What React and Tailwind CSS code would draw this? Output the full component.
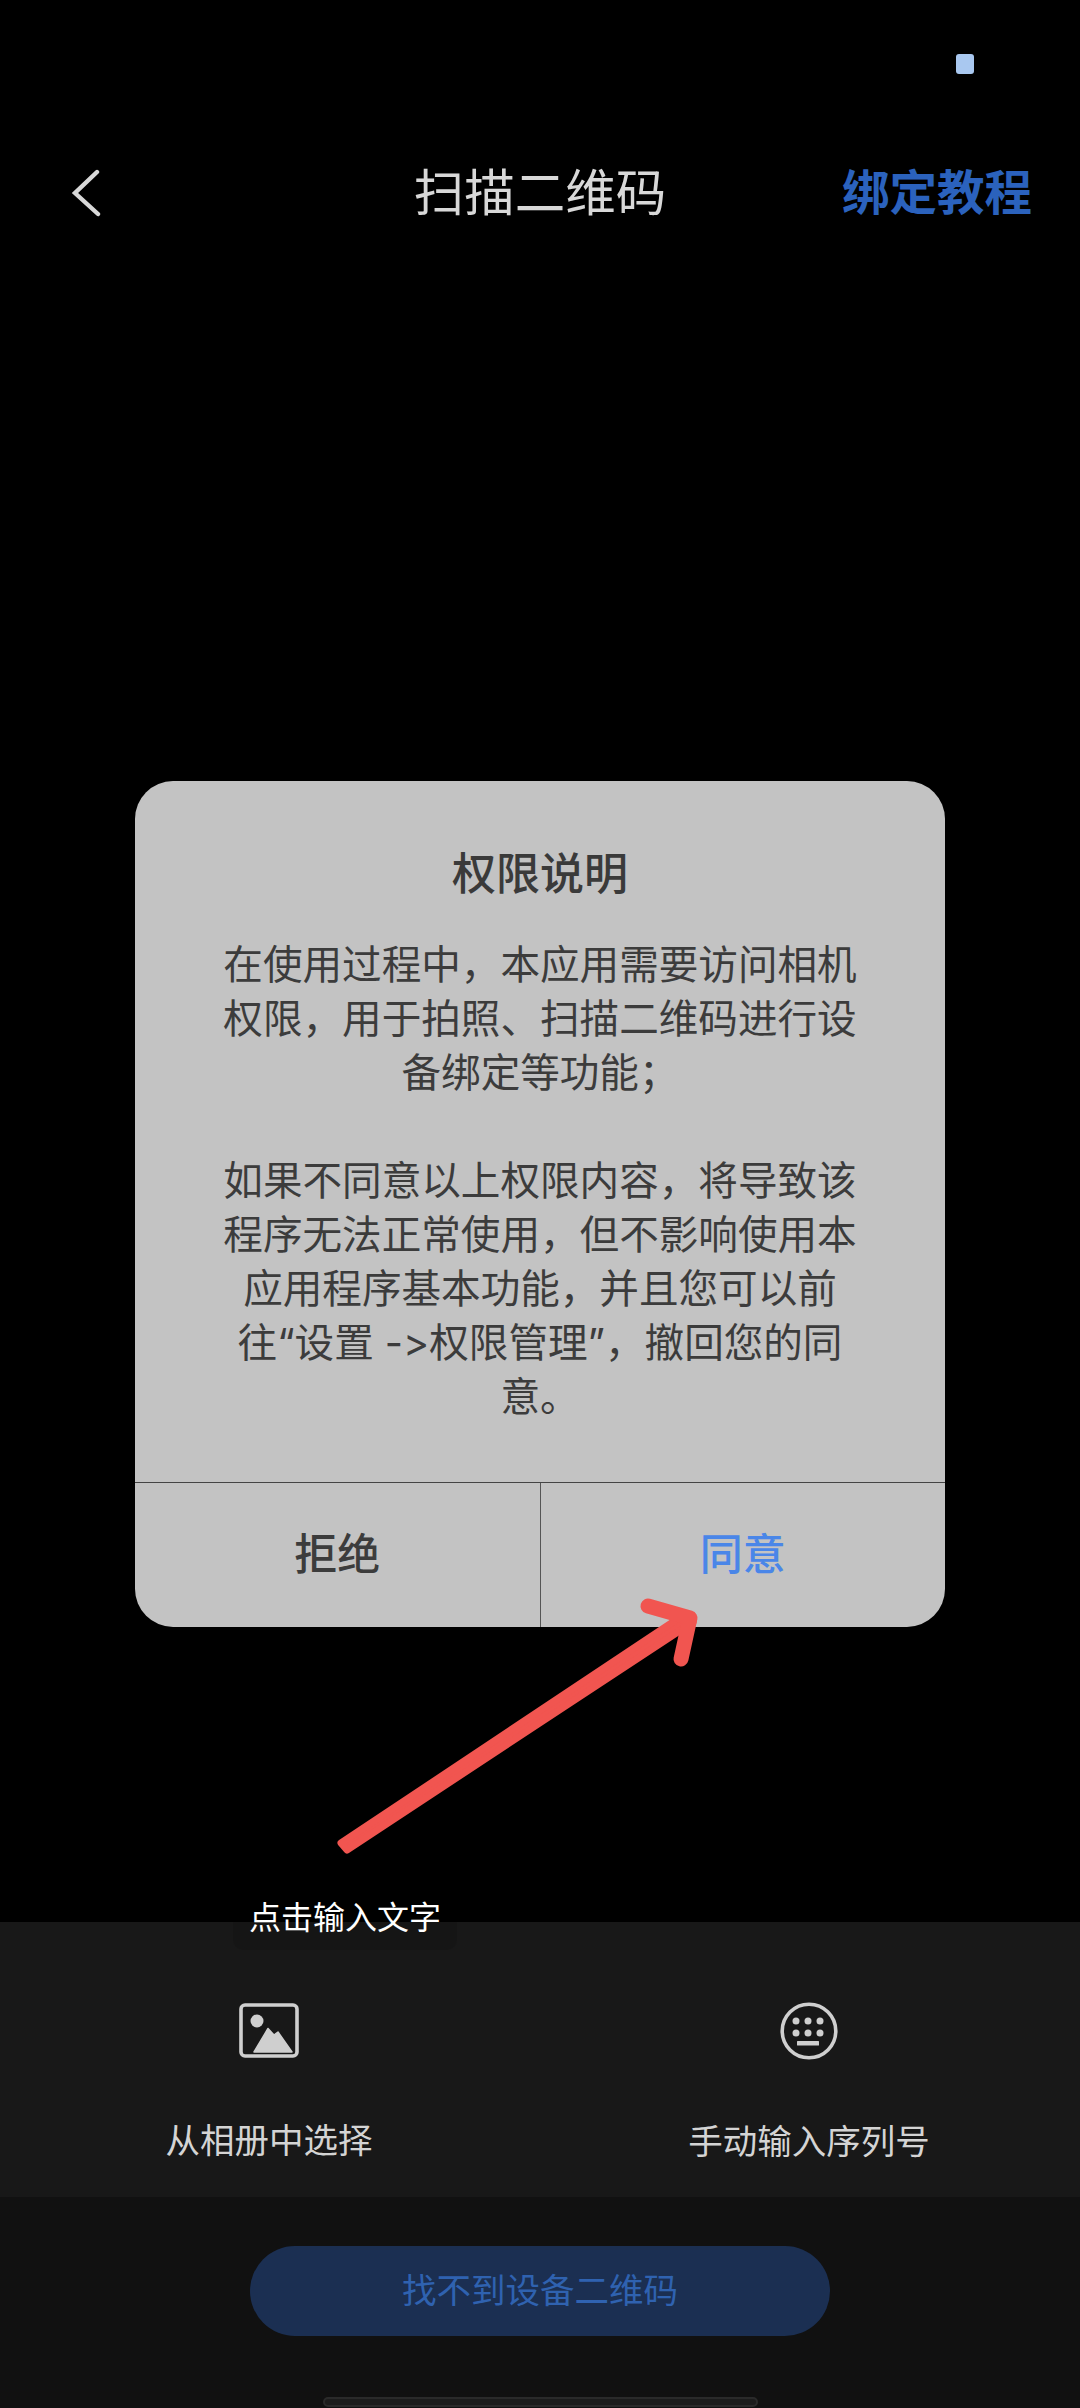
const font = "font-['Inter','Noto_Sans_CJK_SC',sans-serif]";

function ImageIcon() {
  return (
    <svg width="60" height="55" viewBox="0 0 60 55" className="block">
      <rect x="2" y="2" width="56" height="51" rx="4" fill="none" stroke="#cfcfcf" strokeWidth="3.6" />
      <circle cx="18" cy="18" r="6.5" fill="#cfcfcf" />
      <path d="M15 49 L29 25.5 L35 32 L39 29 L53 49 Z" fill="#cfcfcf" stroke="#cfcfcf" strokeWidth="1.5" strokeLinejoin="round" />
    </svg>
  );
}

function KeypadIcon() {
  const xs = [16, 28, 40];
  const ys = [19, 31];
  return (
    <svg width="58" height="58" viewBox="0 0 58 58" className="block">
      <circle cx="29" cy="29" r="26.8" fill="none" stroke="#cfcfcf" strokeWidth="3.6" />
      {ys.map((y) => xs.map((x) => <circle key={`${x}-${y}`} cx={x} cy={y} r="3.5" fill="#cfcfcf" />))}
      <rect x="17" y="39" width="22" height="4.5" rx="0.5" fill="#cfcfcf" />
    </svg>
  );
}

export default function App() {
  return (
    <div className={`relative flex h-[2408px] w-[1080px] flex-col overflow-hidden bg-black ${font}`}>
      <div className="flex justify-end pt-[54px] pr-[106px]">
        <div className="h-[20px] w-[18px] rounded-[3px] bg-[#a9c8f0]" />
      </div>

      <header className="mt-[94px] grid h-[48px] grid-cols-[1fr_auto_1fr] items-center">
        <div className="pl-[70px]">
          <svg width="32" height="48" viewBox="0 0 32 48" className="block">
            <path d="M27 3 L5 24 L28 45" fill="none" stroke="#d8d8d8" strokeWidth="4.4" strokeLinecap="round" strokeLinejoin="miter" />
          </svg>
        </div>
        <h1 className="pt-[1px] text-[50.5px] leading-[48px] text-[#d8d8d8]">扫描二维码</h1>
        <div className="pt-[1px] pr-[48px] text-right text-[47.5px] leading-[48px] font-bold text-[#2b62bd]">绑定教程</div>
      </header>

      <main className="mt-[565px] flex justify-center">
        <section className="flex h-[846px] w-[810px] flex-col overflow-hidden rounded-[38px] bg-[#c3c3c3]">
          <div className="h-[701px] px-[80px] pt-[63px] text-center">
            <h2 className="text-[44px] leading-[60px] font-medium text-[#3a3a3a]">权限说明</h2>
            <p className="mt-[34px] text-[39.6px] leading-[54px] text-[#3c3c3c] [font-variant-ligatures:none]">
              在使用过程中，本应用需要访问相机
              <br />
              权限，用于拍照、扫描二维码进行设
              <br />
              备绑定等功能；
              <br />
              <br />
              如果不同意以上权限内容，将导致该
              <br />
              程序无法正常使用，但不影响使用本
              <br />
              应用程序基本功能，并且您可以前
              <br />
              往“设置 -&gt;权限管理”，撤回您的同
              <br />
              意。
            </p>
          </div>
          <div className="flex flex-1 border-t-[1.5px] border-[#444444] text-[43px] font-medium">
            <button className="flex-1 border-r-[1.5px] border-[#555555] pb-[2px] text-[#3c3c3c]">拒绝</button>
            <button className="flex-1 pb-[2px] text-[#4a86e8]">同意</button>
          </div>
        </section>
      </main>

      <div className="mt-auto">
        <section className="flex h-[275px] bg-[#181818] text-[34.5px] leading-[44px] text-[#d4d4d4]">
          <div className="flex w-[538px] flex-col items-center pt-[81px]">
            <ImageIcon />
            <span className="mt-[61px]">从相册中选择</span>
          </div>
          <div className="flex flex-1 flex-col items-center pt-[80px]">
            <KeypadIcon />
            <span className="mt-[60px]">手动输入序列号</span>
          </div>
        </section>
        <section className="flex h-[211px] flex-col items-center bg-[#111111] pt-[49px]">
          <button className="h-[90px] w-[580px] rounded-[45px] bg-[#1b2f52] text-[34.5px] text-[#2f62b0]">
            找不到设备二维码
          </button>
          <div className="mt-[61px] h-[10px] w-[435px] rounded-[5px] border-2 border-[#2a2a2a] bg-[#1c1c1c]" />
        </section>
      </div>

      <svg width="1080" height="2408" viewBox="0 0 1080 2408" className="pointer-events-none absolute top-0 left-0">
        <path d="M341 1843 L347 1850 L693 1622 L685 1614 Z" fill="#f15550" stroke="#f15550" strokeWidth="7" strokeLinejoin="round" />
        <path d="M648 1606 L690 1618 L681 1659" fill="none" stroke="#f15550" strokeWidth="15" strokeLinecap="round" strokeLinejoin="round" />
      </svg>

      <div className="absolute top-[1886px] left-[233px] flex h-[64px] w-[224px] items-center justify-center rounded-[10px] bg-[#0000001a] pb-[1px] text-[32px] leading-[64px] text-white">
        点击输入文字
      </div>
    </div>
  );
}
